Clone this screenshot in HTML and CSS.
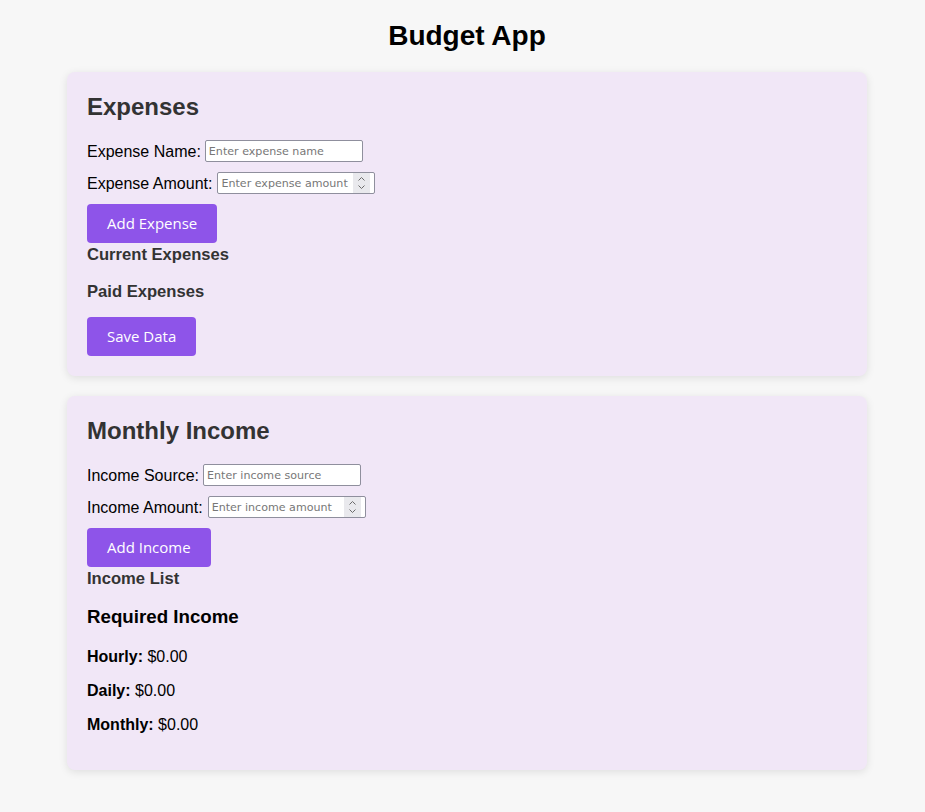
FILE: index.html
```html
<!DOCTYPE html>
<html lang="en">
<head>
<meta charset="utf-8">
<title>Budget App</title>
<link rel="stylesheet" href="styles.css">
</head>
<body>
  <h1 class="app-title">Budget App</h1>
  <main class="container">
    <section class="card">
      <h2 class="card-title">Expenses</h2>
      <div class="field">
        <label for="expense-name">Expense Name:</label>
        <input id="expense-name" class="text-input" type="text" placeholder="Enter expense name">
      </div>
      <div class="field">
        <label for="expense-amount">Expense Amount:</label>
        <span class="num-wrap">
          <input id="expense-amount" class="text-input" type="number" placeholder="Enter expense amount">
          <span class="spinner" aria-hidden="true">
            <svg width="17" height="20" viewBox="0 0 17 20"><path d="M5.5 7.5 L8.5 4.5 L11.5 7.5" fill="none" stroke="#6b6b6b" stroke-width="1"/><path d="M5.5 12.5 L8.5 15.5 L11.5 12.5" fill="none" stroke="#6b6b6b" stroke-width="1"/></svg>
          </span>
        </span>
      </div>
      <button class="btn" type="button">Add Expense</button>
      <h3 class="list-title">Current Expenses</h3>
      <h3 class="list-title">Paid Expenses</h3>
      <button class="btn" type="button">Save Data</button>
    </section>

    <section class="card">
      <h2 class="card-title">Monthly Income</h2>
      <div class="field">
        <label for="income-source">Income Source:</label>
        <input id="income-source" class="text-input" type="text" placeholder="Enter income source">
      </div>
      <div class="field">
        <label for="income-amount">Income Amount:</label>
        <span class="num-wrap">
          <input id="income-amount" class="text-input" type="number" placeholder="Enter income amount">
          <span class="spinner" aria-hidden="true">
            <svg width="17" height="20" viewBox="0 0 17 20"><path d="M5.5 7.5 L8.5 4.5 L11.5 7.5" fill="none" stroke="#6b6b6b" stroke-width="1"/><path d="M5.5 12.5 L8.5 15.5 L11.5 12.5" fill="none" stroke="#6b6b6b" stroke-width="1"/></svg>
          </span>
        </span>
      </div>
      <button class="btn" type="button">Add Income</button>
      <h3 class="list-title">Income List</h3>
      <h3 class="required-title">Required Income</h3>
      <p class="stat"><strong>Hourly:</strong> $0.00</p>
      <p class="stat"><strong>Daily:</strong> $0.00</p>
      <p class="stat"><strong>Monthly:</strong> $0.00</p>
    </section>
  </main>
</body>
</html>
```

FILE: styles.css
```css
html, body {
  margin: 0;
}

body {
  background: #f7f7f7;
  font-family: "Liberation Sans", Arial, sans-serif;
  color: #000;
  padding: 20px 20px 20px 29px;
}

.app-title {
  font-size: 28px;
  line-height: 32px;
  font-weight: bold;
  text-align: center;
  margin: 0 0 20px;
}

.container {
  max-width: 800px;
  margin: 0 auto;
  display: flex;
  flex-direction: column;
  gap: 20px;
}

.card {
  background: #f1e7f7;
  border-radius: 8px;
  box-shadow: 0 2px 8px rgba(0, 0, 0, 0.1);
  padding: 20px;
}

.card-title {
  font-size: 24px;
  line-height: 28px;
  color: #333;
  margin: 1px 0 19px;
}

.field {
  display: flex;
  align-items: center;
  gap: 4px;
  margin-bottom: 10px;
  font-size: 16px;
}

.field label {
  padding-top: 1px;
}

.num-wrap {
  position: relative;
  display: inline-flex;
  margin-left: 1px;
}

.text-input {
  box-sizing: border-box;
  width: 158px;
  height: 22px;
  border: 1px solid #8f8f9d;
  border-radius: 2px;
  background: #fff;
  padding: 1px 3px;
  font-family: "DejaVu Sans", sans-serif;
  font-size: 11.1px;
  color: #000;
}

.text-input[type=number] {
  padding-right: 21px;
  -moz-appearance: textfield;
  appearance: textfield;
}

.text-input::placeholder {
  color: #777;
}

.text-input[type=number]::-webkit-inner-spin-button,
.text-input[type=number]::-webkit-outer-spin-button {
  -webkit-appearance: none;
  margin: 0;
}

.spinner {
  position: absolute;
  top: 1px;
  right: 5px;
  width: 17px;
  height: 20px;
  background: #e9e9ed;
  pointer-events: none;
}

.spinner svg {
  display: block;
}

.btn {
  display: block;
  background: #8e54e9;
  color: #fff;
  border: none;
  border-radius: 4px;
  padding: 10px 20px;
  font-family: "Open Sans", sans-serif;
  font-size: 15px;
  line-height: 19px;
  margin: 0;
}

.list-title {
  font-size: 16.6px;
  line-height: 19px;
  color: #333;
  padding-top: 2px;
  margin: 0 0 16px;
}

.required-title {
  font-size: 18.72px;
  line-height: 21.5px;
  color: #000;
  padding-top: 2px;
  margin: 0 0 20px;
}

.stat {
  font-size: 16px;
  line-height: 18px;
  margin: 0 0 16px;
}
```
